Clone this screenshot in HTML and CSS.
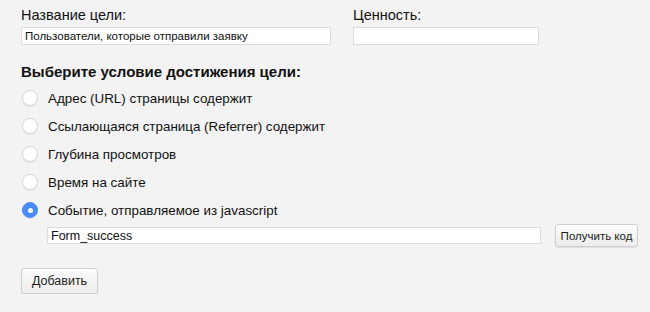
FILE: index.html
```html
<!DOCTYPE html>
<html lang="ru">
  <head>
    <meta charset="UTF-8" />
    <title>Цель</title>
    <link rel="stylesheet" href="styles.css">
  </head>
  <body>
    <form id="formGoal" class="goal-form">
      <div class="top-row">
        <div class="field field-name">
          <label for="goal_name">Название цели:</label>
          <input type="text" id="goal_name" name="goal_name" value="Пользователи, которые отправили заявку" />
        </div>
        <div class="field field-value">
          <label for="goal_value">Ценность:</label>
          <input type="text" id="goal_value" name="goal_value" />
        </div>
      </div>

      <h3 class="section-title">Выберите условие достижения цели:</h3>

      <ul class="conditions">
        <li class="condition">
          <input type="radio" id="cond_url" name="condition" value="url" />
          <label for="cond_url">Адрес (URL) страницы содержит</label>
        </li>
        <li class="condition">
          <input type="radio" id="cond_ref" name="condition" value="referrer" />
          <label for="cond_ref">Ссылающаяся страница (Referrer) содержит</label>
        </li>
        <li class="condition">
          <input type="radio" id="cond_depth" name="condition" value="depth" />
          <label for="cond_depth">Глубина просмотров</label>
        </li>
        <li class="condition">
          <input type="radio" id="cond_time" name="condition" value="time" />
          <label for="cond_time">Время на сайте</label>
        </li>
        <li class="condition">
          <input type="radio" id="cond_js" name="condition" value="js" checked />
          <label for="cond_js">Событие, отправляемое из javascript</label>
        </li>
      </ul>

      <div class="event-row">
        <input type="text" id="event_name" name="event_name" value="Form_success" />
        <button type="button" class="btn btn-small">Получить код</button>
      </div>

      <button type="submit" class="btn btn-add">Добавить</button>
    </form>
  </body>
</html>
```

FILE: styles.css
```css
body {
  font-family: "Liberation Sans", Arial, sans-serif;
  background-color: #f3f3f3;
  color: #111;
  margin: 0;
  padding: 7px 21px 0;
}
.top-row {
  display: flex;
  gap: 22px;
}
.field label {
  display: block;
  font-size: 14.5px;
  line-height: 16px;
  margin-bottom: 3px;
}
.field-name input {
  width: 310px;
}
.field-value input {
  width: 186px;
}
input[type="text"] {
  height: 18px;
  padding: 0 3px;
  font-family: inherit;
  font-size: 11.5px;
  color: #111;
  background: #fff;
  border: 1px solid #dcdcdc;
  border-radius: 0;
  box-sizing: border-box;
  margin: 0;
  outline: none;
}
.section-title {
  font-size: 15px;
  font-weight: bold;
  line-height: 18px;
  margin: 18px 0 3px;
}
.conditions {
  list-style: none;
  margin: 0;
  padding: 0;
}
.condition {
  display: flex;
  align-items: center;
  height: 28px;
  font-size: 13.4px;
}
.condition input[type="radio"] {
  appearance: none;
  width: 16px;
  height: 16px;
  margin: 0 10px 0 1px;
  border-radius: 50%;
  background: #fff;
  border: 1px solid #d6d6d6;
  box-shadow: 0 1px 1px rgba(0, 0, 0, 0.06);
  box-sizing: border-box;
  position: relative;
}
.condition input[type="radio"]:checked {
  background: #4a8af4;
  border-color: #4a8af4;
}
.condition input[type="radio"]:checked::after {
  content: "";
  position: absolute;
  width: 5px;
  height: 5px;
  left: 4.5px;
  top: 4.5px;
  border-radius: 50%;
  background: #fff;
}
.event-row {
  display: flex;
  align-items: center;
  gap: 14px;
  margin: 0 0 0 26px;
}
.event-row input {
  flex: none;
  width: 494px;
  height: 17px;
  font-size: 12.5px;
}
.btn {
  font-family: inherit;
  color: #222;
  background: linear-gradient(#fdfdfd, #ececec);
  border: 1px solid #cfcfcf;
  border-radius: 3px;
  box-shadow: 0 1px 1px rgba(0, 0, 0, 0.08);
  cursor: pointer;
  white-space: nowrap;
}
.btn-small {
  flex: none;
  height: 23px;
  width: 83px;
  padding: 0;
  font-size: 11.5px;
}
.btn-add {
  display: block;
  margin-top: 21px;
  height: 26px;
  width: 77px;
  font-size: 12.5px;
}
```
